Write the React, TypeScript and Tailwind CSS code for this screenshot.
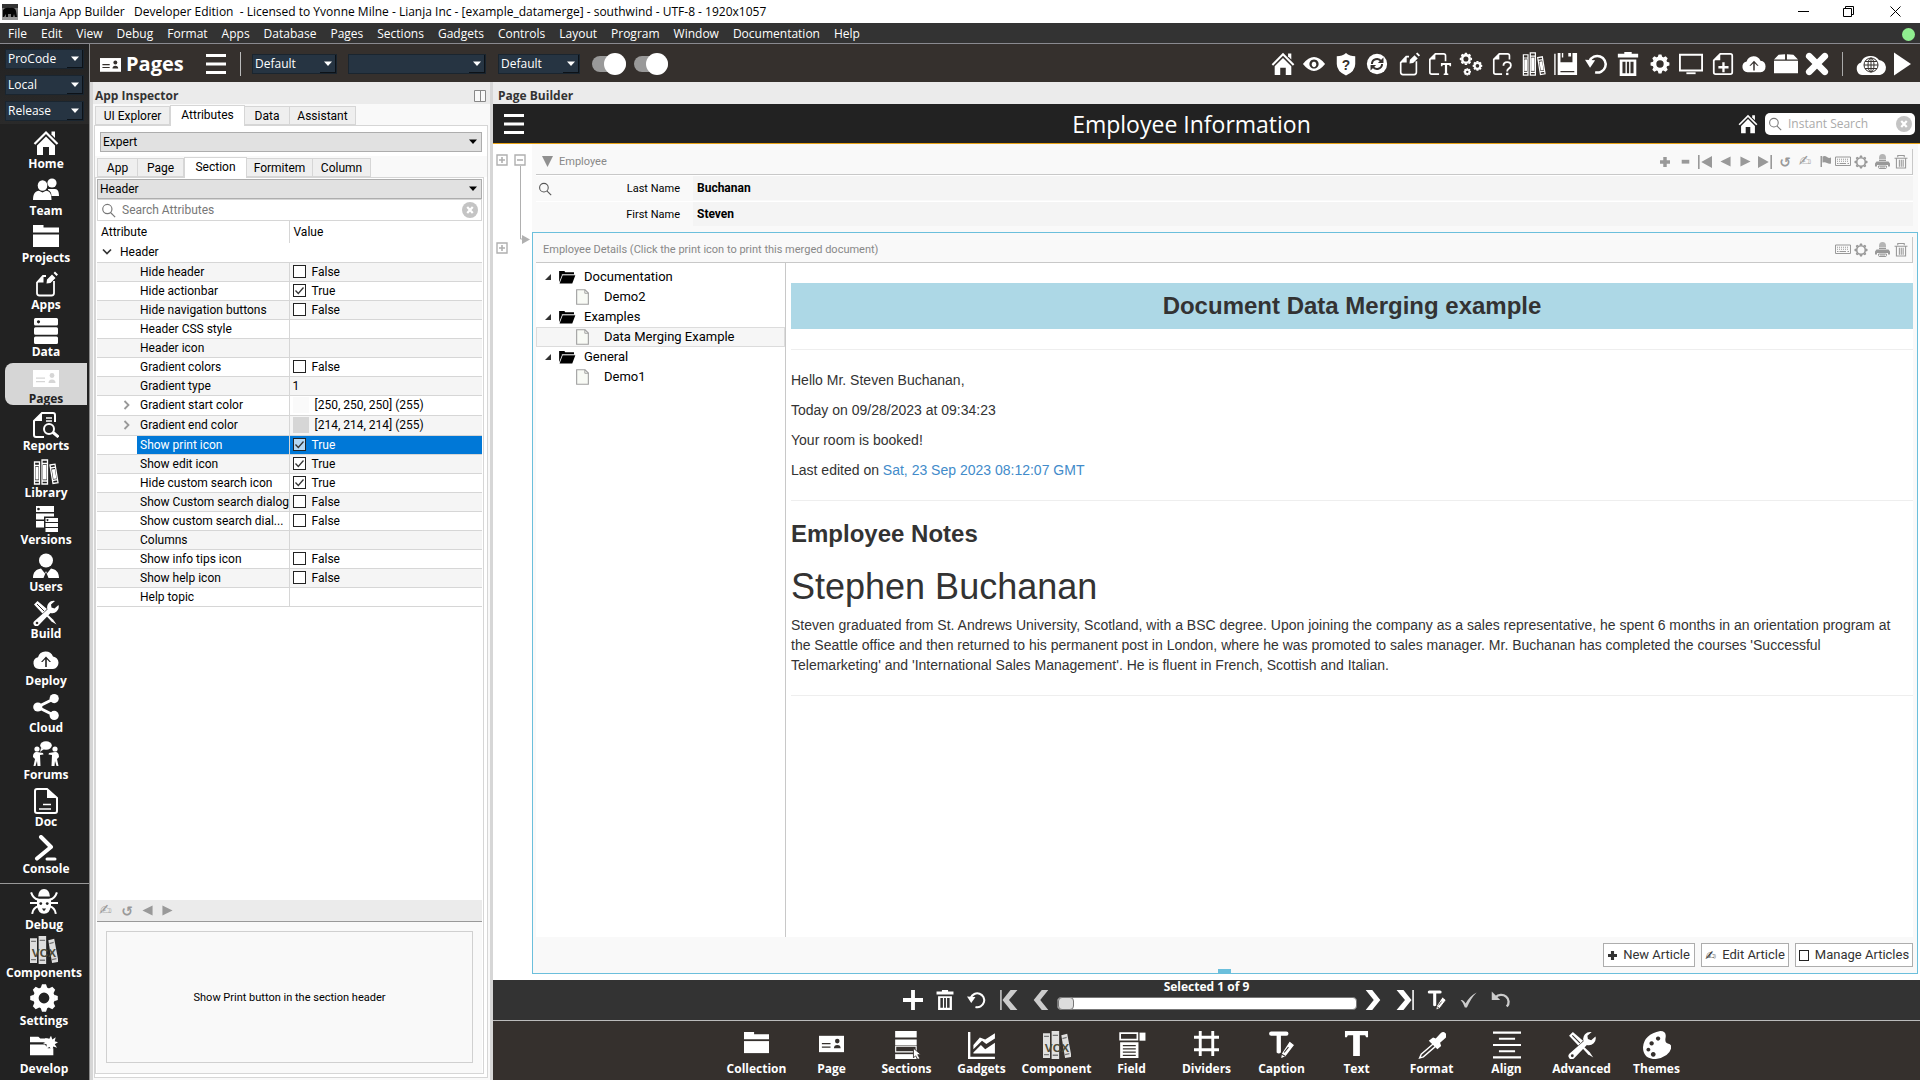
import React, { useState } from "react";
import type { ReactNode } from "react";

type IconProps = { className?: string; box?: string; children?: ReactNode };

function Svg({ className = "size-[26px]", box = "0 0 26 26", children }: IconProps) {
  return (
    <svg viewBox={box} className={`shrink-0 ${className}`} fill="currentColor" aria-hidden="true">
      {children}
    </svg>
  );
}

type P = { className?: string };
const line = (w: number) => ({
  fill: "none",
  stroke: "currentColor",
  strokeWidth: w,
});

const Home = ({ className }: P) => (
  <Svg className={className}>
    <path d="M1.500 14 13 2.500 24.500 14" {...line(2.200)} />
    <path d="M18.500 1.500H22V8l-3.500-3.500z" />
    <path d="M13 6.500 22 15.500V25h-6v-8h-6v8H4v-9.500z" />
  </Svg>
);
const Team = ({ className }: P) => (
  <Svg className={className}>
    <circle cx="19" cy="6" r="4.600" />
    <path d="M15 12h7c3 0 4 3 4 7h-7.500c0-3-1-5-3.500-6z" />
    <ellipse cx="9.500" cy="8.500" rx="4.800" ry="5.300" />
    <path d="M0 23c0-6 2-9 6-9.200l3.500 1.700 3.500-1.700c4 .2 5.500 3.200 5.500 9.200z" />
  </Svg>
);
const Folder = ({ className }: P) => (
  <Svg className={className}>
    <path d="M0 1h10.500v2.500H26v5H0z" />
    <path d="M0 10.500h26V23H0z" />
  </Svg>
);
const PageEdit = ({ className }: P) => (
  <Svg className={className}>
    <path d="M13 5h-3L4 11.500V22q0 2.500 2.500 2.500h12q2.500 0 2.500-2.500V10" {...line(1.800)} />
    <path d="M10.500 5v6.500H4z" />
    <path d="m14 8.500 5-5 3.500 3.500-5 5-4 .5z M20.500 2 22 .5 25 3.500 23.500 5z" />
  </Svg>
);
const Server = ({ className }: P) => (
  <Svg className={className}>
    <path
      fillRule="evenodd"
      d="M2.500 0h21q1.500 0 1.500 1.500v4.500q0 1.500-1.500 1.500h-21Q1 7.500 1 6V1.500Q1 0 2.500 0zM5.500 2.200a1.600 1.600 0 1 0 .01 0zM2.500 9.200h21q1.500 0 1.500 1.500v4.500q0 1.500-1.500 1.500h-21Q1 16.700 1 15.200v-4.500q0-1.500 1.500-1.500zM2.500 18.400h21q1.500 0 1.500 1.500v4.500q0 1.500-1.500 1.500h-21Q1 25.900 1 24.400v-4.500q0-1.500 1.500-1.500z"
    />
  </Svg>
);
const Card = ({ className, ink = "#35302d" }: P & { ink?: string }) => (
  <Svg className={className}>
    <path d="M0 5h26v17H0z" />
    <g fill={ink}>
      <path d="M3 12.500h9v1.300H3zM3 16h9v1.300H3z" />
      <circle cx="19" cy="10.500" r="2.400" />
      <path d="M15.500 18q0-3.500 3.500-3.500t3.500 3.500z" />
    </g>
  </Svg>
);
const Report = ({ className }: P) => (
  <Svg className={className}>
    <path d="M22 10V3q0-2-2-2H9L1 9v14q0 2 2 2h8" {...line(2)} />
    <path d="M9 1v8H1z" />
    <path d="M13 6h6M13 9h6" {...line(1.400)} />
    <circle cx="16" cy="17" r="5" {...line(2)} />
    <path d="m19.500 20 6 5" {...line(3)} />
  </Svg>
);
const Books = ({ className }: P) => (
  <Svg className={className}>
    <path d="M1.500 3h5v22h-5zM1.500 6.500h5M1.500 22h5" {...line(1.300)} />
    <path d="M2.500 8h3v12.500h-3z" />
    <path d="M9 1h5.500v24H9zM9 4.500h5.500M9 22h5.500" {...line(1.300)} />
    <path d="M10 6h3.500v14.500H10z" />
    <path d="m17 6 5-.8 3 18.500-5 .8zM17.500 9l5-.8M19.500 21.500l5-.8" {...line(1.300)} />
    <path d="m18.800 10.500 3-.5 1.600 9.500-3 .5z" />
  </Svg>
);
const Versions = ({ className }: P) => (
  <Svg className={className}>
    <path
      fillRule="evenodd"
      d="M3 0h18v6H3zM5.500 1.700a1.300 1.300 0 1 0 .01 0zM3 7.500h18v3H11v3H3zM3 15h8v6.500H3z"
    />
    <path fillRule="evenodd" d="M12.500 12H25v4H12.500zM14.500 13a1 1 0 1 0 .01 0zM12.500 17H25v4H12.500zM12.500 22H25v4H12.500z" />
  </Svg>
);
const User = ({ className }: P) => (
  <Svg className={className}>
    <circle cx="13" cy="7.500" r="7" />
    <path d="M0 25c0-6 3-8.500 8-9.500l4 5 1-2.500 1 2.500 4-5c5 1 8 3.500 8 9.500H15.500L13.500 20h-1l-2 5z" />
  </Svg>
);
const Tools = ({ className }: P) => (
  <Svg className={className}>
    <path d="M1 4.500 4.500 1l9.500 8-4.500 4.500z" />
    <path d="m4 4 7 7" stroke="#35302d" strokeWidth="1" />
    <path d="m13 13 7 6.500 3.500 5-5-3-6.500-7z" />
    <path d="M22 1a6.500 6.500 0 0 0-7.500 8.500L1.500 21a3 3 0 0 0 4 4.500l12-12.500A6.500 6.500 0 0 0 25.500 5l-4 3.500-3-1-.5-3z" />
    <circle cx="4" cy="23" r="1.300" fill="#35302d" />
  </Svg>
);
const CloudUp = ({ className }: P) => (
  <Svg className={className}>
    <path
      fillRule="evenodd"
      d="M6 22a6 6 0 0 1-1-11.800A8 8 0 0 1 20 9.500 6.300 6.300 0 0 1 20 22zM13 9.500l-5 5.500h1.500l2.700-2.800V20h1.600v-7.800l2.700 2.800H18z"
    />
  </Svg>
);
const Share = ({ className }: P) => (
  <Svg className={className}>
    <path d="M21.500 4.500 4.500 13l17 8.500" {...line(3)} />
    <circle cx="4.800" cy="13" r="4.600" />
    <circle cx="21.200" cy="4.600" r="4.600" />
    <circle cx="21.200" cy="21.400" r="4.600" />
  </Svg>
);
const Forums = ({ className }: P) => (
  <Svg className={className}>
    <ellipse cx="13" cy="4.500" rx="5.800" ry="4.200" />
    <path d="m8 7-1 4 4-3z" />
    <circle cx="4" cy="8" r="2.600" />
    <circle cx="22" cy="8" r="2.600" />
    <path d="M0 16c0-3 1-5 4-5l6 1 .5 1.500-3.500.5.500 11H4.500L4 20l-1.500 5H.5L2 18z" />
    <path d="M26 16c0-3-1-5-4-5l-6 1-.5 1.500 3.500.5-.5 11h3L22 20l1.500 5h2L24 18z" />
  </Svg>
);
const Doc = ({ className }: P) => (
  <Svg className={className}>
    <path d="M14 1H4Q2 1 2 3v20q0 2 2 2h18q2 0 2-2V10z" {...line(2)} />
    <path d="M14 1v9h10z" />
    <path d="M10 16.500h8M6 21h12" {...line(1.500)} />
  </Svg>
);
const Prompt = ({ className }: P) => (
  <Svg className={className}>
    <path d="m8 2 10 10L4 23.500" {...line(4)} strokeLinecap="round" strokeLinejoin="round" />
    <path d="M14 24h8" {...line(3)} strokeLinecap="round" />
  </Svg>
);
const Bug = ({ className }: P) => (
  <Svg className={className}>
    <path d="M1 4q2 6 7 7M25 4q-2 6-7 7M0 14h26M2 24q1-6 6-7M24 24q-1-6-6-7" {...line(1.900)} />
    <path d="M7.500 8Q8 1 13 1t5.500 7z" />
    <path d="M6.500 10h13v6q-1 8-6.500 8t-6.500-8z" />
    <g fill="#222">
      <circle cx="10" cy="14.500" r="1.300" />
      <circle cx="16" cy="14.500" r="1.300" />
      <path d="m11 19 2 2.500 2-2.500z" />
    </g>
  </Svg>
);
const Vcx = ({ className }: P) => (
  <Svg className={className}>
    <g opacity=".85">
      <path d="M0 2h6.500v23H0zM8 0h7v26H8z" />
      <path d="m17 4 5.500-1.500 4 21.500-6 1z" />
    </g>
    <path d="M1 5h4.500M9 4h5M1 22h4.500M9 22.500h5M18 7l4-1M20.500 22l4-1" stroke="#777" strokeWidth="1.200" />
    <text x="13" y="19.500" textAnchor="middle" fontSize="11" fontWeight="700" fontFamily="Liberation Sans, sans-serif" fill="#4b4a38">
      VCX
    </text>
  </Svg>
);

function GearShape({ x = 13, y = 13, r = 7, w = 5, teeth = 8, len = 3 }) {
  const angles = Array.from({ length: teeth }, (_, i) => (i * 360) / teeth);
  return (
    <g>
      <circle cx={x} cy={y} r={r} {...line(w)} />
      {angles.map((a) => (
        <path
          key={a}
          d={`M${x - len * 0.9} ${y - r - w / 2 + 0.6}l${len * 0.35}-${len}h${len * 1.1}l${len * 0.35} ${len}z`}
          transform={`rotate(${a} ${x} ${y})`}
        />
      ))}
    </g>
  );
}
const Gear = ({ className }: P) => (
  <Svg className={className}>
    <GearShape r={7.500} w={5} len={3.400} />
  </Svg>
);
const GearSmall = ({ className }: P) => (
  <Svg className={className}>
    <GearShape r={6} w={4} len={2.800} />
  </Svg>
);
const GearThin = ({ className }: P) => (
  <Svg className={className}>
    <GearShape r={8} w={3} len={3.200} />
  </Svg>
);
const Gears = ({ className }: P) => (
  <Svg className={className}>
    <GearShape x={7.500} y={7.500} r={4} w={2.500} len={2} />
    <GearShape x={20} y={15} r={3} w={2} len={1.800} />
    <GearShape x={9} y={21.500} r={2.200} w={1.800} len={1.500} />
  </Svg>
);
const Develop = ({ className }: P) => (
  <Svg className={className} box="0 0 30 26">
    <path d="M0 3h9l2 2h9v4H0zM0 11.500h16l3 4h6V23H0z" />
    <path d="m22.500 2 1.500 4 3.500-2.500-1 4.500 3.500 1-3.500 2 2.500 4-4-1.500-1.500 4.500-2.500-4-4 2 1-4.500-4-1.500 4-2-2-3.500 4.500 1z" />
  </Svg>
);
const Eye = ({ className }: P) => (
  <Svg className={className}>
    <path
      fillRule="evenodd"
      d="M1 13Q7 5.500 13 5.500T25 13q-6 7.500-12 7.500T1 13zM13 8a5 5 0 1 0 .01 0zM13 10.500a2.500 3 0 1 1-.01 0z"
    />
  </Svg>
);
const Shield = ({ className }: P) => (
  <Svg className={className}>
    <path d="M13 1q4 3.500 10 3.500V13q0 8-10 12.500Q3 21 3 13V4.500Q9 4.500 13 1z" />
    <text x="13" y="19" textAnchor="middle" fontSize="15" fontWeight="700" fontFamily="Liberation Sans, sans-serif" fill="#35302d">
      ?
    </text>
  </Svg>
);
const Refresh = ({ className }: P) => (
  <Svg className={className}>
    <circle cx="13" cy="13" r="11" />
    <path d="M7.500 13a5.500 5.500 0 0 1 10-3M18.500 13a5.500 5.500 0 0 1-10 3" fill="none" stroke="#35302d" strokeWidth="2.200" />
    <path d="M20 6v6h-6zM6 20v-6h6z" fill="#35302d" />
  </Svg>
);
const PageT = ({ className }: P) => (
  <Svg className={className}>
    <path d="M19 10V4q0-2-2-2H8L2 8v14q0 2 2 2h8" {...line(1.800)} />
    <path d="M8 2v6H2z" />
    <path d="M14 12h11v3.500h-1.500l-.5-1.500h-2.300v9l1.300.5V25h-5v-1.500l1.300-.5v-9H16l-.5 1.500H14z" />
  </Svg>
);
const PageQ = ({ className }: P) => (
  <Svg className={className}>
    <path d="M20 8V4q0-2-2-2H9L3 8v14q0 2 2 2h7" {...line(1.800)} />
    <path d="M9 2v6H3z" />
    <path d="M13.500 15q0-4 4-4t4 3.500q0 2-2 3.200t-2 3.300" {...line(2)} />
    <path d="M16.300 22.500h2.600V25h-2.600z" />
  </Svg>
);
const Save = ({ className }: P) => (
  <Svg className={className}>
    <path d="M1 2v23" {...line(1.500)} />
    <path fillRule="evenodd" d="M4 1h3v10h13V1h5v24H4zM7 20.500h15V22H7z" />
    <path d="M15.500 1h3v4h-3zM8.500 1H10v5H8.500z" />
  </Svg>
);
const Undo = ({ className }: P) => (
  <Svg className={className}>
    <path d="M5 10a9 9 0 1 1 6 12" {...line(2.700)} />
    <path d="M0 8.500 11 9l-5.500 8z" />
  </Svg>
);
const UndoArrow = ({ className }: P) => (
  <Svg className={className}>
    <path d="M6 9.500a9 8.500 0 1 1 14.500 12" {...line(3)} />
    <path d="M1 2v11h11z" />
  </Svg>
);
const Trash = ({ className }: P) => (
  <Svg className={className}>
    <path d="M9 0h8v2h7v4H2V2h7z" />
    <path fillRule="evenodd" d="M4 8h18v18H4zM7 10.500V23h3.300V10.500zM11.800 10.500V23h2.400V10.500zM15.700 10.500V23H19V10.500z" />
  </Svg>
);
const TrashThin = ({ className }: P) => (
  <Svg className={className}>
    <path d="M7 4V1h12v3M1 6h24M4.500 7v17h17V7M10 9v13M13.500 9v13M17 9v13" {...line(2)} />
  </Svg>
);
const Monitor = ({ className }: P) => (
  <Svg className={className}>
    <path d="M1 3h24v17H1z" {...line(2)} />
    <path d="M8 23h10" {...line(2)} />
  </Svg>
);
const PagePlus = ({ className }: P) => (
  <Svg className={className}>
    <path d="M10 2h11q2 0 2 2v18q0 2-2 2H5q-2 0-2-2V9z" {...line(1.900)} />
    <path d="M10 2v7H3z" />
    <path d="M13.500 11v11M8 16.500h11" {...line(2.500)} />
  </Svg>
);
const Box = ({ className }: P) => (
  <Svg className={className}>
    <path d="m5 3 7-.5V8H0zM21 3l-7-.5V8h12zM0 9.500h26V23H0z" />
  </Svg>
);
const Cross = ({ className }: P) => (
  <Svg className={className}>
    <path d="m4.500 4.500 17 17M21.500 4.500l-17 17" {...line(7)} strokeLinecap="round" />
  </Svg>
);
const CloudGlobe = ({ className }: P) => (
  <Svg className={className} box="0 0 32 26">
    <path d="M7 24a6.500 6.500 0 0 1-1-12.500A10 9 0 0 1 24 9a7.600 7.600 0 0 1 1 15z" />
    <g fill="none" stroke="#35302d" strokeWidth="1">
      <circle cx="16" cy="14" r="7" />
      <ellipse cx="16" cy="14" rx="3" ry="7" />
      <path d="M9 14h14M16 7v14M10 10.500h12M10 17.500h12" />
    </g>
  </Svg>
);
const Play = ({ className }: P) => (
  <Svg className={className}>
    <path d="M5 1.500 22 13 5 24.500z" />
  </Svg>
);
const Search = ({ className }: P) => (
  <Svg className={className}>
    <circle cx="11" cy="10.500" r="8" {...line(2)} />
    <path d="m16.500 16.500 8 8" {...line(2)} />
  </Svg>
);
const Clear = ({ className }: P) => (
  <Svg className={className}>
    <circle cx="13" cy="13" r="13" />
    <path d="m8.500 8 9 10M17.500 8l-9 10" stroke="#fff" strokeWidth="3.500" />
  </Svg>
);
const Writing = ({ className = "" }: P) => (
  <span aria-hidden="true" className={`flex shrink-0 items-center justify-center font-['DejaVu_Sans',sans-serif] leading-none ${className}`}>✍</span>
);
const Rewind = ({ className = "" }: P) => (
  <span aria-hidden="true" className={`flex shrink-0 items-center justify-center font-['DejaVu_Sans',sans-serif] leading-none font-bold ${className}`}>↺</span>
);
const Keyboard = ({ className }: P) => (
  <Svg className={className} box="0 0 32 22">
    <path d="M1 2h30v17H1z" {...line(2)} />
    <path d="M4 6.500h24M4 10.500h24" {...line(2)} strokeDasharray="2 2" />
    <path d="M4 15h3M9 15h13M25 15h3" {...line(2)} />
  </Svg>
);
const Printer = ({ className }: P) => (
  <Svg className={className} box="0 0 30 30">
    <path d="M8 8q0-8 7-8t7 8v3H8z" opacity=".7" />
    <path d="M8 12h14v2H8zM3 15h24l3 4v6h-4v-3H4v3H0v-6z" />
    <path d="M7 24h16v3q0 2-3 2H10q-3 0-3-2zM10 26h10" {...line(2)} />
  </Svg>
);
const Flag = ({ className }: P) => (
  <Svg className={className}>
    <path d="M3 2h3v22H3zM7 3q5-2 9 1t8 1v12q-4 1.500-8-1t-9-1z" />
  </Svg>
);
const Plus = ({ className }: P) => (
  <Svg className={className}>
    <path d="M10.500 0h5v10.500H26v5H15.500V26h-5V15.500H0v-5h10.500z" />
  </Svg>
);
const FatPlus = ({ className }: P) => (
  <Svg className={className}>
    <path d="M8.500 0h9v8.500H26v9h-8.500V26h-9v-8.500H0v-9h8.500z" />
  </Svg>
);
const Minus = ({ className }: P) => (
  <Svg className={className}>
    <path d="M4 9h18v9H4z" />
  </Svg>
);
const Left = ({ className }: P) => (
  <Svg className={className}>
    <path d="M25 1v24L1 13z" />
  </Svg>
);
const Right = ({ className }: P) => (
  <Svg className={className}>
    <path d="M1 1v24l24-12z" />
  </Svg>
);
const First = ({ className }: P) => (
  <Svg className={className}>
    <path d="M0 0h3v26H0zM26 2v22L6 13z" />
  </Svg>
);
const Last = ({ className }: P) => (
  <Svg className={className}>
    <path d="M23 0h3v26h-3zM0 2v22l20-11z" />
  </Svg>
);
const ChevLeft = ({ className }: P) => (
  <Svg className={className}>
    <path d="M14 0h8.500L12 13l10.500 13H14L3.500 13z" />
  </Svg>
);
const ChevRight = ({ className }: P) => (
  <Svg className={className}>
    <path d="M12 0H3.500L14 13 3.500 26H12l10.500-13z" />
  </Svg>
);
const ChevFirst = ({ className }: P) => (
  <Svg className={className}>
    <path d="M1.500 0h2v26h-2zM15 0h9L13 13l11 13h-9L4.500 13z" />
  </Svg>
);
const ChevLast = ({ className }: P) => (
  <Svg className={className}>
    <path d="M24.500 0h-2v26h2zM11 0H2l11 13L2 26h9l10.500-13z" />
  </Svg>
);
const Caption = ({ className }: P) => (
  <Svg className={className}>
    <path d="M3 2.500h14" {...line(4)} strokeLinecap="round" />
    <path d="M8 3h4v17q-2 2-4 0z" />
    <path d="m20 9 5 4-8.500 11-5 2 1-5.500z" stroke="#35302d" strokeWidth="1.200" />
    <path d="m19 15-4 5M12.500 21.500l3.500 2" stroke="#35302d" strokeWidth="1" />
  </Svg>
);
const Check = ({ className }: P) => (
  <Svg className={className}>
    <path d="M1 13q4-1 7 5Q14 7 24 2q-9 9-14 22H7Q5 17 1 13z" />
  </Svg>
);
const SectionsIcon = ({ className }: P) => (
  <Svg className={className}>
    <path d="M2 0h20v6H2zM2 8h20v5H2z" />
    <path fillRule="evenodd" d="M2 13.500h20V20H2zM3 14.700v4h18v-4z" />
    <path d="M2 21.500h20V26H2z" />
    <path d="m19 16 7 6h-3l2 3.500-2 1-2-3.500-2 2z" stroke="#35302d" strokeWidth=".8" />
  </Svg>
);
const Chart = ({ className }: P) => (
  <Svg className={className}>
    <path d="M1 1v24h24" {...line(2.400)} />
    <path d="m5 13 6-7 5 2 9-6v5l-8 5-4-3-8 8z" />
    <path d="m5 20 7-7 4 4 9-6v10H5z" />
  </Svg>
);
const FieldIcon = ({ className }: P) => (
  <Svg className={className}>
    <path d="M2 2h16v6H2z" {...line(1.600)} />
    <path d="M20 1.500h5.500V9H20z" />
    <path fillRule="evenodd" d="M2 10.500h17V25H2zM4.500 13h12v1.200h-12zM4.500 16h12v1.200h-12zM4.500 19h12v1.200h-12zM4.500 22h12v1.200h-12z" />
  </Svg>
);
const Dividers = ({ className }: P) => (
  <Svg className={className}>
    <path d="M6.500 0v26M19.500 0v26M0 6.500h26M0 19.500h26" {...line(3)} />
  </Svg>
);
const TextT = ({ className }: P) => (
  <Svg className={className}>
    <path d="M1 0h24v6.500h-2L22 4.500h-5.500V26h-7V4.500H4l-1 2H1z" />
  </Svg>
);
const Dropper = ({ className }: P) => (
  <Svg className={className}>
    <path d="M14 12 3 21.500 1.500 25 5 24l11-9.500" {...line(1.300)} />
    <path d="m14 6 2.500 1L21 2q2.500-2 4.500 0t0 4.500L20.500 11l1 3-3.500 3-8-8z" />
  </Svg>
);
const Align = ({ className }: P) => (
  <Svg className={className}>
    <path d="M0 1.500h26M5.500 7.200h15M0 13h26M5.500 18.800h15M0 24.500h26" {...line(2)} />
  </Svg>
);
const Palette = ({ className }: P) => (
  <Svg className={className}>
    <path
      fillRule="evenodd"
      d="M16 0q6 0 5 6-1 5 2 5.500 4 .5 3 5Q24 24 12 26 0 26 0 15 1 3 16 0zM14 5a2 2 0 1 0 .01 0zM8 9.500a2 2 0 1 0 .01 0zM5 15.500a1.800 1.800 0 1 0 .01 0zM9.500 19.500a2.200 2.200 0 1 0 .01 0z"
    />
  </Svg>
);
const FolderOpen = ({ className }: P) => (
  <Svg className={className} box="0 0 20 16">
    <path d="M1 4V1h6l1 1.500h10V5H4.500L1 14z" />
    <path d="M5 6h14.500L16 15.500H1.500z" />
    <path d="M4 5.300h15.500" stroke="#ddd" strokeWidth=".8" />
  </Svg>
);
const FileIcon = ({ className }: P) => (
  <Svg className={className} box="0 0 14 17">
    <path d="M.7.7h9l3.600 3.600v12H.7z" fill="#f8faf5" stroke="#a0a0a0" strokeWidth="1.200" />
    <path d="M9.500.7v3.800h3.800" fill="none" stroke="#a0a0a0" />
  </Svg>
);
const Elephant = ({ className }: P) => (
  <Svg className={className} box="0 0 16 16">
    <path d="M0 0h16v16H0z" fill="#777" />
    <path d="M0 0h16v4H0z" fill="#333" />
    <path d="M1 6q2-3 7-2 5-1 6 3l1 6h-2l-1-3-1 3H9v-3H6v3H4v-3l-2 3H1z" fill="#050505" />
    <path d="M0 13h16v3H0z" fill="#999" />
  </Svg>
);
const Caret = ({ className = "size-[8px]" }: P) => (
  <Svg className={className} box="0 0 8 8">
    <path d="M0 1.500h8L4 6z" />
  </Svg>
);
const Burger = () => (
  <Svg className="size-[20px]" box="0 0 20 20">
    <path d="M0 0h20v3H0zM0 8.500h20v3H0zM0 17h20v3H0z" />
  </Svg>
);

function DarkSelect({ value, label, className }: { value: string; label: string; className: string }) {
  return (
    <div className={`grid h-5 items-center border border-[#1a252f] bg-[#263442] text-white ${className}`}>
      <select
        aria-label={label}
        defaultValue={value}
        className="h-full w-full appearance-none truncate bg-transparent pl-0.5 text-xs leading-4 outline-none [grid-area:1/1]"
      >
        <option>{value}</option>
      </select>
      <span className="pointer-events-none flex h-full w-4 items-center justify-center justify-self-end border-r border-b border-[#0c1218] [grid-area:1/1]">
        <Caret />
      </span>
    </div>
  );
}

function LightSelect({ value, label, className }: { value: string; label: string; className: string }) {
  return (
    <div className={`grid h-5 shrink-0 items-center border border-[#adadad] bg-[#e1e1e1] ${className}`}>
      <select
        aria-label={label}
        defaultValue={value}
        className="w-full appearance-none bg-transparent pl-0.5 text-xs leading-4 outline-none [grid-area:1/1]"
      >
        <option>{value}</option>
      </select>
      <Caret className="pointer-events-none mr-1 size-[8px] justify-self-end [grid-area:1/1]" />
    </div>
  );
}

function IconButton({ icon: Icon, label, size, className = "" }: { icon: React.FC<P>; label: string; size: string; className?: string }) {
  return (
    <button type="button" aria-label={label} className={`flex shrink-0 items-center justify-center ${className}`}>
      <Icon className={size} />
    </button>
  );
}

const menus = ["File", "Edit", "View", "Debug", "Format", "Apps", "Database", "Pages", "Sections", "Gadgets", "Controls", "Layout", "Program", "Window", "Documentation", "Help"];

function TitleBar() {
  return (
    <header className="flex h-[23px] shrink-0 items-center bg-white pl-0.5 text-black">
      <Elephant className="size-4" />
      <h1 className="ml-[5px] text-xs leading-4 whitespace-pre">
        Lianja App Builder   Developer Edition  - Licensed to Yvonne Milne - Lianja Inc - [example_datamerge] - southwind - UTF-8 - 1920x1057
      </h1>
      <div className="ml-auto flex items-center">
        <button type="button" aria-label="Minimize" className="flex w-[45px] justify-center">
          <svg viewBox="0 0 11 11" className="size-[11px]"><path d="M0 5.500h11" stroke="#000" /></svg>
        </button>
        <button type="button" aria-label="Restore" className="flex w-[45px] justify-center">
          <svg viewBox="0 0 11 11" className="size-[11px]"><path d="M.5 2.500h8v8h-8zM2.500 2.500v-2h8v8h-2" fill="none" stroke="#000" /></svg>
        </button>
        <button type="button" aria-label="Close" className="flex w-[49px] justify-center">
          <svg viewBox="0 0 11 11" className="size-[11px]"><path d="m.5.5 10 10M10.500.5l-10 10" stroke="#000" /></svg>
        </button>
      </div>
    </header>
  );
}

function MenuBar() {
  return (
    <nav className="flex h-[21px] shrink-0 items-center border-b border-[#8a8a90] bg-[#333] pt-0.5 pr-[5px] pl-px text-white" aria-label="Main menu">
      {menus.map((m) => (
        <button key={m} type="button" className="px-[7px] text-xs leading-4">{m}</button>
      ))}
      <span className="ml-auto size-[13px] rounded-full bg-[#90ee90]" />
    </nav>
  );
}

const sideTop: [string, React.FC<P>][] = [
  ["Home", Home], ["Team", Team], ["Projects", Folder], ["Apps", PageEdit], ["Data", Server], ["Pages", Card], ["Reports", Report], ["Library", Books],
  ["Versions", Versions], ["Users", User], ["Build", Tools], ["Deploy", CloudUp], ["Cloud", Share], ["Forums", Forums], ["Doc", Doc], ["Console", Prompt],
];
const sideBottom: [string, React.FC<P>][] = [["Debug", Bug], ["Components", Vcx], ["Settings", Gear], ["Develop", Develop]];

function Sidebar() {
  return (
    <aside className="flex w-[90px] shrink-0 flex-col border-r border-[#8a8a8a] bg-[#222] text-white">
      <div className="flex flex-col gap-1.5 bg-linear-to-b from-[#222] to-[#2a2a2a] pt-[5px] pb-[3px] pl-[5px]">
        <DarkSelect value="ProCode" label="Mode" className="w-[79px]" />
        <DarkSelect value="Local" label="Target" className="w-[79px]" />
        <DarkSelect value="Release" label="Build type" className="w-[79px]" />
      </div>
      <div className="flex grow-[746] basis-0 flex-col justify-between pt-1 pb-[7px]">
        {sideTop.map(([name, Icon]) => {
          const on = name === "Pages";
          return (
            <button
              key={name}
              type="button"
              className={`ml-[5px] flex h-[42px] w-[82px] flex-col items-center justify-between ${on ? "rounded-l-lg bg-[#d6d6d6] text-[#222]" : ""}`}
            >
              {on ? (
                <span className="text-white"><Card className="mt-0.5 size-[26px]" ink="#d6d6d6" /></span>
              ) : (
                <Icon className="mt-0.5 size-[26px]" />
              )}
              <span className="text-xs leading-3 font-bold">{name}</span>
            </button>
          );
        })}
      </div>
      <div className="flex grow-[188] basis-0 flex-col justify-between border-t border-[#999] pt-1 pb-1">
        {sideBottom.map(([name, Icon]) => (
          <button key={name} type="button" className="flex h-[44px] w-[88px] flex-col items-center justify-between">
            <Icon className="size-[28px]" />
            <span className="text-xs leading-[14px] font-bold">{name}</span>
          </button>
        ))}
      </div>
    </aside>
  );
}

const tools: [string, React.FC<P>][] = [
  ["Home", Home], ["Preview", Eye], ["Security", Shield], ["Refresh", Refresh], ["Edit page", PageEdit], ["Text page", PageT], ["Build all", Gears], ["Page help", PageQ], ["Library", Books],
  ["Save", Save], ["Undo", Undo], ["Delete", Trash], ["Settings", GearSmall], ["Display", Monitor], ["New page", PagePlus], ["Deploy", CloudUp], ["Package", Box], ["Close", Cross],
];

function Toggle({ label }: { label: string }) {
  return (
    <label className="flex h-[21px] w-[34px] items-center">
      <input type="checkbox" role="switch" defaultChecked aria-label={label} className="peer sr-only" />
      <span className="flex h-4 w-full items-center justify-end rounded-full bg-[#999]">
        <span className="size-[22px] shrink-0 rounded-full bg-white" />
      </span>
    </label>
  );
}

function Toolbar() {
  return (
    <div className="flex h-[38px] shrink-0 items-center bg-[#35302d] pt-0.5 pr-[5px] pl-2.5 text-white">
      <Card className="size-[21px]" />
      <h2 className="ml-[5px] w-[59px] text-xl leading-6 font-bold">Pages</h2>
      <button type="button" aria-label="Menu" className="ml-[21px]"><Burger /></button>
      <span className="ml-3.5 h-6 w-px bg-[#bbb]" />
      <DarkSelect value="Default" label="Page" className="ml-[11px] w-[85px]" />
      <DarkSelect value="" label="Section" className="ml-[11px] w-[138px]" />
      <DarkSelect value="Default" label="Theme" className="ml-3 w-[82px]" />
      <div className="ml-3 flex gap-2">
        <Toggle label="Design mode" />
        <Toggle label="Live mode" />
      </div>
      <div className="ml-auto flex w-[560px] justify-between">
        {tools.map(([l, I]) => (
          <IconButton key={l} icon={I} label={l} size="size-[24px]" className="w-[26px]" />
        ))}
      </div>
      <span className="ml-3 h-6 w-px bg-[#aaa]" />
      <IconButton icon={CloudGlobe} label="Open in browser" size="h-[26px] w-[32px]" className="ml-3" />
      <IconButton icon={Play} label="Run" size="size-[26px]" className="ml-0.5" />
    </div>
  );
}

function Tabs({ items, active, widths, lead }: { items: string[]; active: string; widths: string[]; lead: string }) {
  return (
    <div role="tablist" className={`flex h-[21px] shrink-0 items-end ${lead}`}>
      {items.map((t, i) => (
        <button
          key={t}
          type="button"
          role="tab"
          aria-selected={t === active}
          className={`${widths[i]} text-xs leading-4 ${
            t === active
              ? "z-10 -mb-px h-[21px] border border-b-0 border-[#d6d6d6] bg-white pb-0.5"
              : "h-[19px] border border-l-0 border-[#d6d6d6] bg-[#efefef] first:border-l"
          }`}
        >
          {t}
        </button>
      ))}
    </div>
  );
}

type Row = { name: string; check?: boolean; text?: string; swatch?: string };
const rows: Row[] = [
  { name: "Hide header", check: false },
  { name: "Hide actionbar", check: true },
  { name: "Hide navigation buttons", check: false },
  { name: "Header CSS style" },
  { name: "Header icon" },
  { name: "Gradient colors", check: false },
  { name: "Gradient type", text: "1" },
  { name: "Gradient start color", text: "[250, 250, 250] (255)", swatch: "bg-[#fafafa]" },
  { name: "Gradient end color", text: "[214, 214, 214] (255)", swatch: "bg-[#d6d6d6]" },
  { name: "Show print icon", check: true },
  { name: "Show edit icon", check: true },
  { name: "Hide custom search icon", check: true },
  { name: "Show Custom search dialog", check: false },
  { name: "Show custom search dial...", check: false },
  { name: "Columns" },
  { name: "Show info tips icon", check: false },
  { name: "Show help icon", check: false },
  { name: "Help topic" },
];

function AttributeRow({ row, index }: { row: Row; index: number }) {
  const [checked, setChecked] = useState(!!row.check);
  const selected = row.name === "Show print icon";
  const tone = index % 2 === 0 ? "bg-[#f5f5f5]" : "bg-white";
  return (
    <tr className={`${row.swatch ? "h-5" : "h-[19px]"} ${tone} border-b border-[#d6d6d6]`}>
      <td className="border-r border-[#d6d6d6] p-0">
        <div className="flex h-full items-center">
          <span className="flex w-10 shrink-0 items-center justify-end pr-1.5 text-[#999]">
            {row.swatch && (
              <svg viewBox="0 0 8 10" className="h-[10px] w-[8px]"><path d="m1.500 1 4 4-4 4" fill="none" stroke="currentColor" strokeWidth="1.800" /></svg>
            )}
          </span>
          <span className={`grow pl-[3px] leading-[18px] whitespace-nowrap ${selected ? "bg-[#0078d7] text-white" : ""}`}>{row.name}</span>
        </div>
      </td>
      <td className={`p-0 ${selected ? "bg-[#0078d7] text-white" : ""}`}>
        {row.check !== undefined ? (
          <label className="flex items-center gap-1.5 pl-[3px] leading-[18px]">
            <span className="grid size-[13px] place-items-center">
              <input
                type="checkbox"
                checked={checked}
                onChange={(e) => setChecked(e.target.checked)}
                className={`size-[13px] appearance-none border border-[#222] [grid-area:1/1] ${selected ? "bg-[#b3d7f3]" : "bg-white"}`}
              />
              {checked && (
                <svg viewBox="0 0 13 13" className="pointer-events-none size-[13px] [grid-area:1/1]"><path d="m2.500 6.500 2.800 3 5.200-6" fill="none" stroke="#333" strokeWidth="1.300" /></svg>
              )}
            </span>
            {checked ? "True" : "False"}
          </label>
        ) : (
          <span className="flex items-center pl-[3px] leading-[18px]">
            {row.swatch && <span className={`mr-1.5 size-4 ${row.swatch}`} />}
            {row.text}
          </span>
        )}
      </td>
    </tr>
  );
}

function Inspector() {
  return (
    <section aria-label="App Inspector" className="flex w-[403px] shrink-0 flex-col border-r-[3px] border-l-[3px] border-[#d6d6d6] bg-[#f9f9f9]">
      <div className="flex h-[22px] shrink-0 items-center justify-between bg-[#ebebeb] pt-1.5 pr-1 pl-0.5">
        <h3 className="text-xs leading-4 font-bold text-[#333]">App Inspector</h3>
        <button type="button" aria-label="Dock panel">
          <svg viewBox="0 0 12 12" className="size-3"><path d="M.5.5h11v11H.5zM6.500 1v10" fill="#f9f9f9" stroke="#888" /></svg>
        </button>
      </div>
      <div className="flex min-h-0 grow flex-col font-['Roboto',sans-serif]">
        <Tabs
          lead="pl-0.5"
          items={["UI Explorer", "Attributes", "Data", "Assistant"]}
          active="Attributes"
          widths={["w-[75px]", "w-[75px]", "w-[45px]", "w-[66px]"]}
        />
        <div className="mr-0.5 mb-0.5 ml-px flex min-h-0 grow flex-col border border-[#d6d6d6] bg-white pt-1.5">
          <LightSelect value="Expert" label="Attribute level" className="mx-[5px]" />
          <div className="mt-1 bg-[#f9f9f9]">
            <Tabs
              lead="pl-0.5"
              items={["App", "Page", "Section", "Formitem", "Column"]}
              active="Section"
              widths={["w-[41px]", "w-[46px]", "w-[63px]", "w-[66px]", "w-[58px]"]}
            />
          </div>
          <div className="mr-[3px] mb-[3px] flex min-h-0 grow flex-col border border-[#d6d6d6] bg-white px-px">
            <LightSelect value="Header" label="Attribute group" className="mt-px" />
            <label className="flex h-[22px] shrink-0 items-center border border-[#d6d6d6] px-[3px] text-[#777]">
              <Search className="size-[15px]" />
              <input type="text" placeholder="Search Attributes" className="ml-1.5 w-0 grow bg-transparent text-xs leading-4 outline-none placeholder:text-[#777]" />
              <button type="button" aria-label="Clear search" className="text-[#c4c4c4]"><Clear className="size-4" /></button>
            </label>
            <table className="w-full table-fixed border-collapse text-xs text-black">
              <colgroup>
                <col className="w-[192px]" />
                <col />
              </colgroup>
              <thead>
                <tr className="h-[22px]">
                  <th className="border-r border-[#d6d6d6] p-0 pl-1 text-left font-normal">Attribute</th>
                  <th className="p-0 pl-1 text-left font-normal">Value</th>
                </tr>
              </thead>
              <tbody>
                <tr className="h-[19px] border-b border-[#d6d6d6]">
                  <th colSpan={2} className="p-0 text-left font-normal">
                    <button type="button" aria-expanded="true" className="flex items-center gap-2 pl-[5px] leading-[18px]">
                      <svg viewBox="0 0 10 8" className="h-[8px] w-[10px]"><path d="m1 1.500 4 4 4-4" fill="none" stroke="#333" strokeWidth="1.700" /></svg>
                      Header
                    </button>
                  </th>
                </tr>
                {rows.map((r, i) => (
                  <AttributeRow key={r.name} row={r} index={i} />
                ))}
              </tbody>
            </table>
            <div className="mt-auto flex h-[22px] shrink-0 items-center gap-[9px] border-b border-[#999] bg-[#ebebeb] pl-0.5 text-[#999]">
              <IconButton icon={Writing} label="Edit" size="size-[13px] text-[15px]" />
              <IconButton icon={Rewind} label="Reset" size="size-[12px] text-[14px]" />
              <IconButton icon={Left} label="Back" size="size-[11px]" />
              <IconButton icon={Right} label="Forward" size="size-[11px]" />
            </div>
            <div className="bg-[#f9f9f9] px-[9px] pt-[9px] pb-2.5">
              <p className="flex h-[132px] items-center justify-center border border-[#d0d0d0] pt-0.5 text-[11px] leading-4 text-black">
                Show Print button in the section header
              </p>
            </div>
          </div>
        </div>
      </div>
    </section>
  );
}

function SectionTools({ full }: { full?: boolean }) {
  return (
    <div className="ml-auto flex items-center text-[#999]">
      {full && (
        <div className="flex items-center">
          <IconButton icon={FatPlus} label="Add" size="size-[10px]" className="w-5" />
          <IconButton icon={Minus} label="Remove" size="size-[11px]" className="w-5" />
          <IconButton icon={First} label="First" size="size-[14px]" className="w-5" />
          <IconButton icon={Left} label="Previous" size="size-[11px]" className="w-5" />
          <IconButton icon={Right} label="Next" size="size-[11px]" className="w-5" />
          <IconButton icon={Last} label="Last" size="size-[14px]" className="w-5" />
          <IconButton icon={Rewind} label="Refresh" size="size-[12px] text-[14px]" className="w-5" />
          <IconButton icon={Writing} label="Edit" size="size-[13px] text-[15px]" className="w-5" />
          <IconButton icon={Flag} label="Flag" size="size-[13px]" className="w-5" />
        </div>
      )}
      <IconButton icon={Keyboard} label="Keyboard" size="h-[11px] w-[16px]" />
      <IconButton icon={GearThin} label="Settings" size="size-[14px]" className="ml-[3px]" />
      <IconButton icon={Printer} label="Print" size="size-[15px]" className="ml-[7px]" />
      <IconButton icon={TrashThin} label="Delete" size="size-[14px]" className="ml-1" />
    </div>
  );
}

const BoxToggle = ({ plus }: { plus?: boolean }) => (
  <svg viewBox="0 0 12 12" className="size-3 shrink-0" fill="none" stroke="#b0b0b0">
    <path d="M1 1h10v10H1z" strokeWidth="1.400" />
    <path d={plus ? "M3 6h6M6 3v6" : "M3 6h6"} strokeWidth="1.600" />
  </svg>
);

const fields = [["Last Name", "Buchanan"], ["First Name", "Steven"]];
const tree = [
  { name: "Documentation", child: "Demo2" },
  { name: "Examples", child: "Data Merging Example" },
  { name: "General", child: "Demo1" },
];

function Article() {
  return (
    <article className="min-w-0 grow bg-white pt-5 pl-[5px] font-['Liberation_Sans',sans-serif] text-sm leading-5 text-[#333]">
      <h2 className="bg-[#add8e6] py-2.5 text-center text-2xl leading-[26px] font-bold">Document Data Merging example</h2>
      <hr className="mt-5 border-[#eee]" />
      <div className="mt-5 flex flex-col gap-2.5">
        <p>Hello Mr. Steven Buchanan,</p>
        <p>Today on 09/28/2023 at 09:34:23</p>
        <p>Your room is booked!</p>
        <p>Last edited on <a href="#edited" className="text-[#428bca]">Sat, 23 Sep 2023 08:12:07 GMT</a></p>
      </div>
      <hr className="mt-5 border-[#eee]" />
      <h2 className="mt-5 text-2xl leading-[26px] font-bold">Employee Notes</h2>
      <h1 className="mt-5 text-4xl leading-10">Stephen Buchanan</h1>
      <p className="mt-2 pr-2">
        Steven graduated from St. Andrews University, Scotland, with a BSC degree. Upon joining the company as a sales representative, he spent 6 months in an orientation program at the Seattle office and then returned to his permanent post in London, where he was promoted to sales manager. Mr. Buchanan has completed the courses 'Successful Telemarketing' and 'International Sales Management'. He is fluent in French, Scottish and Italian.
      </p>
      <hr className="mt-5 border-[#eee]" />
    </article>
  );
}

const ghost = "flex h-6 items-center justify-center gap-1.5 border border-[#adadad] bg-white text-[13px] leading-4 text-[#333]";

function Canvas() {
  return (
    <div className="flex min-h-0 grow bg-white font-['Roboto',sans-serif]">
      <div className="flex w-[39px] shrink-0 flex-col pt-2.5 pl-[3px]">
        <div className="flex gap-1.5"><BoxToggle plus /><BoxToggle /></div>
        <svg viewBox="0 0 12 78" className="ml-[23px] h-[78px] w-3">
          <path d="M1.500 0v73H4" fill="none" stroke="#b0b0b0" />
          <path d="M3 69v9l8-4.500z" fill="#b0b0b0" />
        </svg>
        <div className="-mt-0.5"><BoxToggle plus /></div>
      </div>
      <div className="mr-0.5 flex min-w-0 grow flex-col">
        <section className="bg-[#f9f9f9] pt-[5px] pr-[5px] pb-[5px] pl-1">
          <div className="flex h-[26px] items-center border-r border-b border-[#c8c8c8] pr-1 pl-1.5">
            <svg viewBox="0 0 11 11" className="size-[11px]"><path d="M0 0h11L5.500 11z" fill="#909090" /></svg>
            <h3 className="ml-1.5 text-[11px] leading-4 text-[#888]">Employee</h3>
            <SectionTools full />
          </div>
          {fields.map(([label, value], i) => (
            <div key={label} className="flex h-[26px] items-stretch border-t border-white">
              <div className="flex w-[157px] shrink-0 items-center pr-[13px] pl-0.5">
                {i === 0 && <Search className="size-[14px] text-[#555]" />}
                <label htmlFor={value} className="ml-auto text-[11px] leading-4">{label}</label>
              </div>
              <input id={value} type="text" defaultValue={value} className="mb-px w-0 grow bg-[#f4f4f4] pl-1 text-xs leading-4 font-bold outline-none" />
            </div>
          ))}
        </section>
        <section className="flex min-h-0 grow flex-col border border-[#6bbfdc] bg-[#f9f9f9] pt-1 pr-1 pl-[3px]">
          <div className="flex h-[26px] shrink-0 items-center border-r border-b border-[#c8c8c8] pr-1 pl-[7px]">
            <h3 className="text-[11px] leading-4 text-[#888]">Employee Details (Click the print icon to print this merged document)</h3>
            <SectionTools />
          </div>
          <div className="flex min-h-0 grow">
            <ul className="w-[250px] shrink-0 border-r border-[#c8c8c8] bg-white pt-1 text-[13px] leading-5 text-black">
              {tree.map((t) => (
                <li key={t.name}>
                  <button type="button" className="flex h-5 w-full items-center pl-[9px]">
                    <svg viewBox="0 0 6 6" className="size-1.5"><path d="M6 0v6H0z" fill="#333" /></svg>
                    <FolderOpen className="ml-[7px] h-[14px] w-[18px]" />
                    <span className="ml-2">{t.name}</span>
                  </button>
                  <button
                    type="button"
                    className={`flex h-5 w-full items-center border pl-[39px] ${t.child === "Data Merging Example" ? "border-[#dcdcdc] bg-[#f6f6f6]" : "border-transparent"}`}
                  >
                    <FileIcon className="h-4 w-[13px]" />
                    <span className="ml-[15px]">{t.child}</span>
                  </button>
                </li>
              ))}
            </ul>
            <Article />
          </div>
          <div className="grid h-9 shrink-0">
            <div className="flex items-center justify-end gap-1.5 [grid-area:1/1]">
              <button type="button" className={`${ghost} w-[92px]`}><FatPlus className="size-[9px]" />New Article</button>
              <button type="button" className={`${ghost} w-[88px]`}><Writing className="size-[11px] text-[13px]" />Edit Article</button>
              <button type="button" className={`${ghost} w-[118px]`}><span className="h-[11px] w-[10px] border border-[#222]" />Manage Articles</button>
            </div>
            <span className="h-1 w-[13px] self-end justify-self-center bg-[#6bbfdc] [grid-area:1/1]" />
          </div>
        </section>
      </div>
    </div>
  );
}

const gadgets: [string, React.FC<P>][] = [
  ["Collection", Folder], ["Page", Card], ["Sections", SectionsIcon], ["Gadgets", Chart], ["Component", Vcx], ["Field", FieldIcon], ["Dividers", Dividers],
  ["Caption", Caption], ["Text", TextT], ["Format", Dropper], ["Align", Align], ["Advanced", Tools], ["Themes", Palette],
];

function PageBuilder() {
  return (
    <main className="flex min-w-0 grow flex-col">
      <div className="flex h-[22px] shrink-0 items-center bg-[#ebebeb] pt-1.5 pl-[5px]">
        <h3 className="text-xs leading-4 font-bold text-[#333]">Page Builder</h3>
      </div>
      <div className="grid h-10 shrink-0 items-center border-b border-[#e8a317] bg-[#222] pr-[5px] pl-[11px] text-white">
        <button type="button" aria-label="Page menu" className="w-5 [grid-area:1/1]"><Burger /></button>
        <h2 className="pr-9 text-center text-[23px] leading-7 [grid-area:1/1]">Employee Information</h2>
        <div className="flex items-center gap-[7px] justify-self-end [grid-area:1/1]">
          <IconButton icon={Home} label="Page home" size="size-[20px]" />
          <label className="flex h-[22px] w-[150px] items-center rounded-[5px] bg-white px-[3px] text-[#777]">
            <Search className="size-[14px]" />
            <input type="text" placeholder="Instant Search" className="ml-1.5 w-0 grow text-xs leading-4 outline-none placeholder:text-[#aaa]" />
            <button type="button" aria-label="Clear" className="text-[#c4c4c4]"><Clear className="size-4" /></button>
          </label>
        </div>
      </div>
      <Canvas />
      <div className="flex h-[47px] shrink-0 justify-center gap-1.5 border-t-[6px] border-b border-t-white border-b-[#bbb] bg-[#333] text-white">
        <div className="flex items-center gap-3">
          <IconButton icon={Plus} label="Add record" size="size-[20px]" />
          <IconButton icon={Trash} label="Delete record" size="size-[20px]" />
          <IconButton icon={Undo} label="Refresh record" size="size-[20px]" />
          <IconButton icon={ChevFirst} label="First record" size="size-[20px]" className="text-[#ccc]" />
          <IconButton icon={ChevLeft} label="Previous record" size="size-[20px]" className="text-[#ccc]" />
        </div>
        <div className="flex w-[300px] flex-col items-center">
          <label htmlFor="record" className="text-xs leading-[14px] font-bold">Selected 1 of 9</label>
          <input
            id="record"
            type="range"
            min={1}
            max={9}
            defaultValue={1}
            className="mt-[3px] h-[13px] w-full appearance-none rounded border border-[#777] bg-white [&::-webkit-slider-thumb]:h-[13px] [&::-webkit-slider-thumb]:w-4 [&::-webkit-slider-thumb]:appearance-none [&::-webkit-slider-thumb]:rounded [&::-webkit-slider-thumb]:border [&::-webkit-slider-thumb]:border-[#777] [&::-webkit-slider-thumb]:bg-[#ddd]"
          />
        </div>
        <div className="flex items-center gap-3">
          <IconButton icon={ChevRight} label="Next record" size="size-[20px]" />
          <IconButton icon={ChevLast} label="Last record" size="size-[20px]" />
          <IconButton icon={Caption} label="Edit record" size="size-[20px]" />
          <IconButton icon={Check} label="Accept" size="size-[18px]" className="w-5 text-[#ccc]" />
          <IconButton icon={UndoArrow} label="Cancel" size="size-[20px]" className="text-[#ccc]" />
        </div>
      </div>
      <div className="flex h-[59px] shrink-0 justify-center bg-[#35302d] pt-2.5 text-white">
        {gadgets.map(([name, Icon]) => (
          <button key={name} type="button" className="flex h-[45px] w-[75px] flex-col items-center justify-between">
            <Icon className={name === "Collection" || name === "Page" || name === "Dividers" || name === "Text" ? "size-[25px]" : "size-[28px]"} />
            <span className="text-xs leading-[14px] font-bold">{name}</span>
          </button>
        ))}
      </div>
    </main>
  );
}

export default function App() {
  return (
    <div className="flex h-screen w-full flex-col overflow-hidden bg-white font-['Open_Sans','Noto_Sans',sans-serif]">
      <TitleBar />
      <MenuBar />
      <div className="flex min-h-0 grow">
        <Sidebar />
        <div className="flex min-w-0 grow flex-col">
          <Toolbar />
          <div className="flex min-h-0 grow">
            <Inspector />
            <PageBuilder />
          </div>
        </div>
      </div>
    </div>
  );
}
